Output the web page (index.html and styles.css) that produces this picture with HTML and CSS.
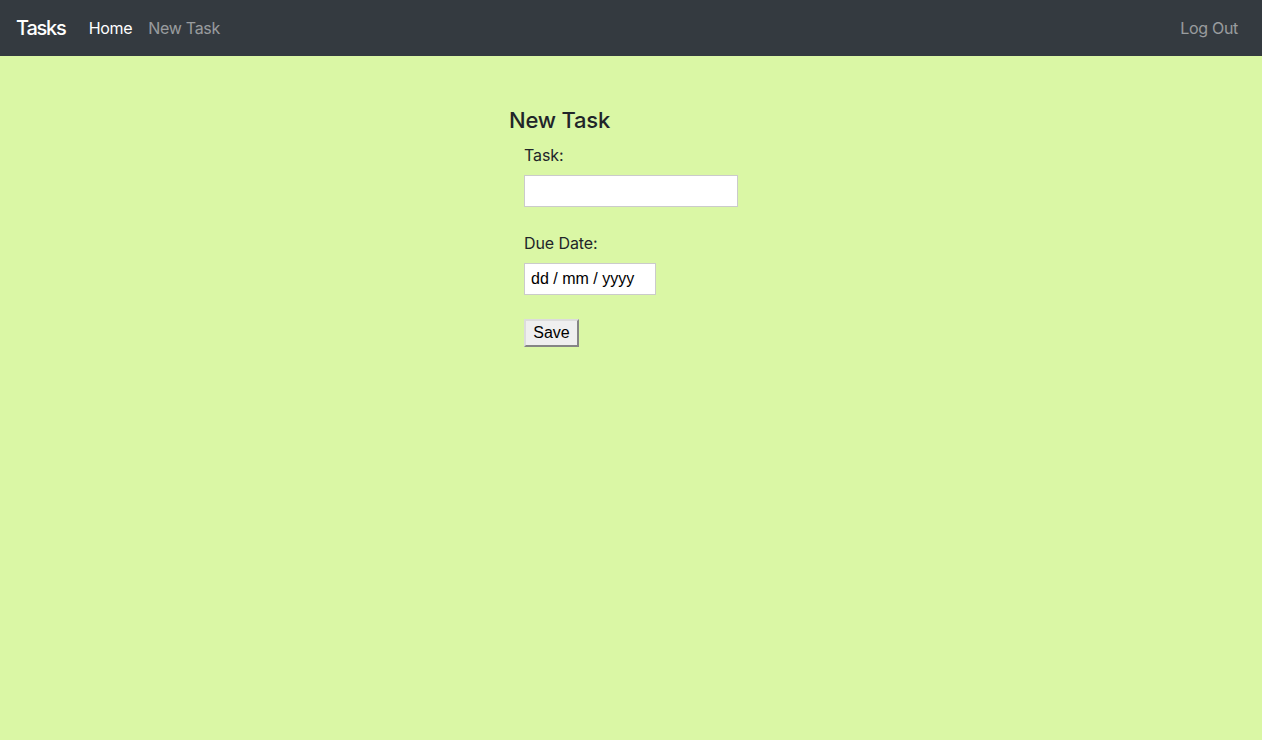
FILE: index.html
```html
<!DOCTYPE html>
<html lang="en">
<head>
<meta charset="utf-8">
<title>Tasks</title>
<link rel="stylesheet" href="styles.css">
</head>
<body>
<nav class="navbar">
  <a class="brand" href="#">Tasks</a>
  <ul class="nav">
    <li><a class="nav-link active" href="#">Home</a></li>
    <li><a class="nav-link" href="#">New Task</a></li>
  </ul>
  <ul class="nav nav-right">
    <li><a class="nav-link" href="#">Log Out</a></li>
  </ul>
</nav>
<main class="content">
  <section class="panel">
    <h4 class="title">New Task</h4>
    <form class="form">
      <label class="label" for="task">Task:</label>
      <input class="field field-task" id="task" type="text">
      <label class="label label-gap" for="due">Due Date:</label>
      <input class="field field-date" id="due" type="text" placeholder="dd / mm / yyyy">
      <div class="actions"><button class="btn" type="button">Save</button></div>
    </form>
  </section>
</main>
</body>
</html>
```

FILE: styles.css
```css
* { box-sizing: border-box; }
html, body { height: 100%; }
body {
  margin: 0;
  font-family: Inter, "Noto Sans", "Liberation Sans", sans-serif;
  font-size: 16px;
  line-height: 1.5;
  color: #212529;
  background: #daf7a5;
}
.navbar {
  display: flex;
  align-items: center;
  height: 56px;
  padding: 0 16px;
  background: #343a40;
}
.brand {
  font-size: 20px;
  font-weight: 500;
  letter-spacing: -1.2px;
  line-height: 30px;
  color: #fff;
  text-decoration: none;
  margin-right: 15px;
}
.nav {
  display: flex;
  list-style: none;
  margin: 0;
  padding: 0;
}
.nav-right { margin-left: auto; }
.nav-link {
  display: block;
  padding: 0 8px;
  color: rgba(255,255,255,.5);
  text-decoration: none;
  font-size: 16px;
  letter-spacing: -0.3px;
}
.nav-link.active { color: #fff; }
.content {
  display: flex;
  justify-content: center;
  padding-top: 50px;
}
.panel {
  width: 244px;
}
.title {
  margin: 0 0 8px;
  font-size: 22px;
  font-weight: 500;
  letter-spacing: -0.2px;
  line-height: 29px;
}
.form {
  display: flex;
  flex-direction: column;
  align-items: flex-start;
  padding-left: 15px;
}
.label {
  display: block;
  margin-bottom: 8px;
  line-height: 24px;
  letter-spacing: -0.1px;
}
.label-gap { margin-top: 24px; }
.field {
  height: 32px;
  border: 1px solid #cbcbcb;
  background: #fff;
  font-family: "Liberation Sans", Arial, sans-serif;
  font-size: 16px;
  color: #000;
  padding: 0 6px;
  outline: none;
}
.field::placeholder { color: #000; opacity: 1; }
.field-task { width: 214px; }
.field-date { width: 132px; }
.actions { margin-top: 24px; }
.btn {
  width: 55px;
  height: 28px;
  padding: 0;
  font-family: "Liberation Sans", Arial, sans-serif;
  font-size: 16px;
  color: #000;
  background: #efefef;
  border: 2px solid;
  border-color: #dcdcdc #858585 #858585 #dcdcdc;
}
```
